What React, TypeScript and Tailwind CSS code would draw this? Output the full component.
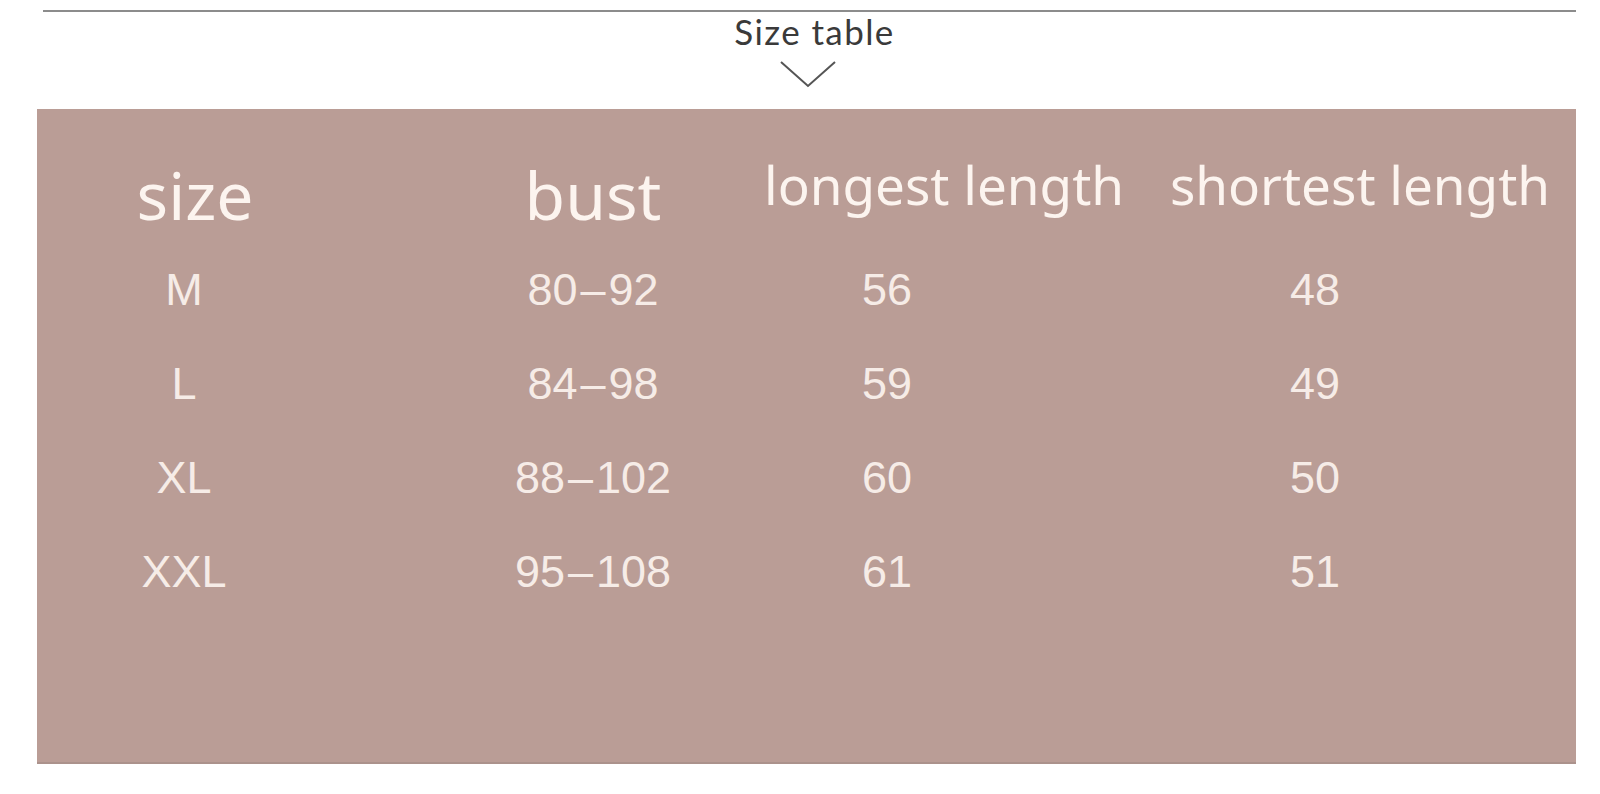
import React from "react";

const headers = [
  { text: "size", w: "w-[220px]", ml: "ml-[48px]", cls: "text-[66px]" },
  { text: "bust", w: "w-[220px]", ml: "ml-[178px]", cls: "text-[66px]" },
  { text: "longest length", w: "w-[400px]", ml: "ml-[41px]", cls: "text-[53px] -mt-[3px]" },
  { text: "shortest length", w: "w-[420px]", ml: "ml-[6px]", cls: "text-[53px] -mt-[3px]" },
];

const rows = [
  ["M", "80–92", "56", "48"],
  ["L", "84–98", "59", "49"],
  ["XL", "88–102", "60", "50"],
  ["XXL", "95–108", "61", "51"],
];

const dataCols = ["ml-[47px]", "ml-[209px]", "ml-[94px]", "ml-[228px]"];

function Cell({ value }: { value: string }) {
  const parts = value.split("–");
  if (parts.length === 1) return <>{value}</>;
  return (
    <>
      {parts[0]}
      <span className="mx-[3px]">–</span>
      {parts[1]}
    </>
  );
}

export default function App() {
  return (
    <div className="w-[1600px] h-[794px] bg-white overflow-hidden">
      <div className="pt-[10px]">
        <div className="ml-[43px] w-[1533px] h-[2px] bg-[#8c8c8c]" />
      </div>
      <div className="flex flex-col items-center">
        <div
          className="mt-[2px] ml-[29px] text-[35px] leading-none tracking-[1.4px] text-[#3a3a3a]"
          style={{ fontFamily: "Lato, 'Liberation Sans', sans-serif" }}
        >
          Size table
        </div>
        <svg width="56" height="28" viewBox="0 0 56 28" className="mt-[11px] ml-[16px]">
          <polyline points="1,2 28,26 55,2" fill="none" stroke="#555" strokeWidth="2" />
        </svg>
      </div>
      <div className="ml-[37px] mt-[21px] w-[1539px] h-[655px] bg-[#ba9d96] border-b-[2px] border-[#ab928c] pt-[52px]">
        <div
          className="flex items-start text-[#fcf4ef]"
          style={{ fontFamily: "'Noto Sans', 'Open Sans', sans-serif" }}
        >
          {headers.map((h) => (
            <div key={h.text} className={`${h.w} ${h.ml} shrink-0 text-center leading-none ${h.cls}`}>
              {h.text}
            </div>
          ))}
        </div>
        <div
          className="mt-[40px] flex flex-col gap-[49px] text-[#f6ece7]"
          style={{ fontFamily: "'Liberation Sans', Arial, sans-serif" }}
        >
          {rows.map((r) => (
            <div key={r[0]} className="flex items-start">
              {r.map((c, i) => (
                <div key={i} className={`w-[200px] shrink-0 text-center text-[45px] leading-none ${dataCols[i]}`}>
                  <Cell value={c} />
                </div>
              ))}
            </div>
          ))}
        </div>
      </div>
    </div>
  );
}
